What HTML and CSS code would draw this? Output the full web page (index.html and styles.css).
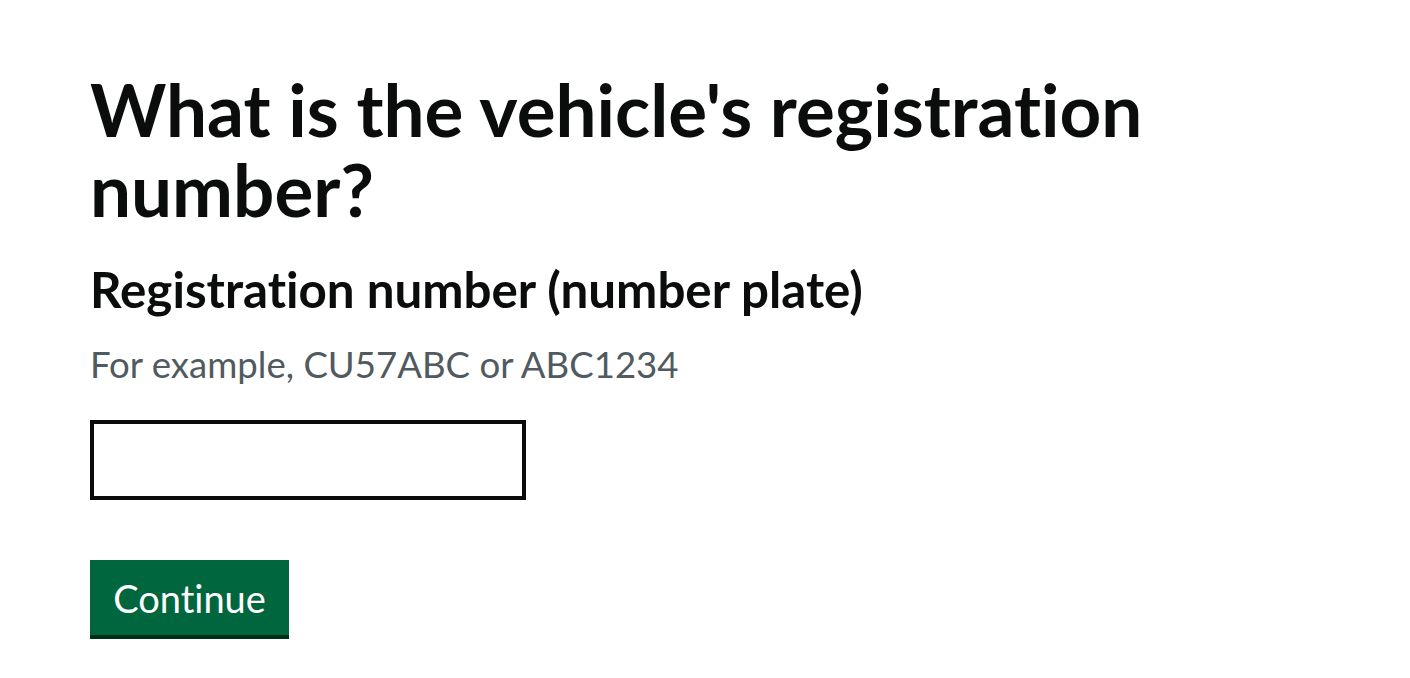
FILE: index.html
```html
<!DOCTYPE html>
<html lang="en">
<head>
<meta charset="utf-8">
<title>What is the vehicle's registration number?</title>
<link rel="stylesheet" href="styles.css">
</head>
<body>
<main class="page">
  <h1 class="heading">What is the vehicle's registration number?</h1>
  <div class="form-group">
    <label class="label" for="reg">Registration number (number plate)</label>
    <div class="hint">For example, CU57ABC or ABC1234</div>
    <input class="input" id="reg" type="text">
  </div>
  <button class="button" type="button">Continue</button>
</main>
</body>
</html>
```
FILE: styles.css
```css
html, body {
  margin: 0;
  padding: 0;
  background: #ffffff;
}
body {
  font-family: Lato, "Liberation Sans", Arial, sans-serif;
  font-variant-ligatures: none;
  color: #0b0c0c;
}
.page {
  padding: 69px 90px 0 90px;
  display: flex;
  flex-direction: column;
  align-items: flex-start;
}
.heading {
  margin: 0;
  font-size: 72.8px;
  line-height: 80px;
  font-weight: 700;
  max-width: 1160px;
}
.form-group {
  display: flex;
  flex-direction: column;
  align-items: flex-start;
  margin-top: 30px;
}
.label {
  font-size: 49.3px;
  line-height: 60px;
  font-weight: 700;
}
.hint {
  margin-top: 20px;
  font-size: 36.6px;
  line-height: 50px;
  color: #505a5f;
}
.input {
  margin-top: 31px;
  box-sizing: border-box;
  width: 436px;
  height: 80px;
  border: 4px solid #0b0c0c;
  border-radius: 0;
  background: #fff;
  padding: 0 10px;
  font: inherit;
  font-size: 38px;
}
.button {
  margin-top: 60px;
  box-sizing: border-box;
  width: 199px;
  height: 79px;
  border: 0;
  border-bottom: 4px solid #002d18;
  border-radius: 0;
  background: #00663e;
  color: #ffffff;
  font-family: Lato, "Liberation Sans", Arial, sans-serif;
  font-variant-ligatures: none;
  font-size: 38px;
  line-height: 40px;
  padding: 0;
  cursor: pointer;
}
```
